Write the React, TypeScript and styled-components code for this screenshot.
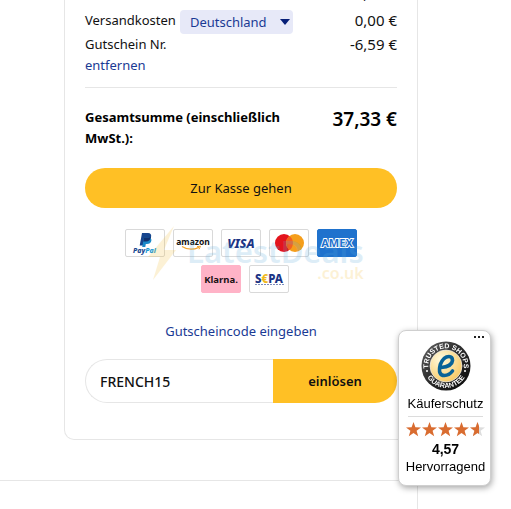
import React from "react";
import styled, { createGlobalStyle } from "styled-components";

const GlobalStyle = createGlobalStyle`
  *, *::before, *::after { box-sizing: border-box; }
  html { overflow: hidden; }
  body { margin: 0; background: #fff; color: #111; font: 13px/21px "Noto Sans", sans-serif; }
  button, input, select { font: inherit; color: inherit; margin: 0; }
`;

const Page = styled.div`
  min-height: 100vh;
  padding-right: 93px;
  display: grid;
  grid-template-columns: minmax(0, 1fr);
  grid-template-rows: auto 1fr;
`;

const Section = styled.section`
  padding: 0 0 40px 64px;
  border-bottom: 1px solid #e6e6e6;
`;

const Below = styled.div`
  min-height: 28px;
  border-right: 1px solid #e6e6e6;
`;

const Card = styled.main`
  position: relative;
  display: flow-root;
  padding: 0 20px 36px;
  border: 1px solid #e6e6e6;
  border-top: 0;
  border-radius: 0 0 10px 10px;
`;

const Totals = styled.dl`
  margin: 0;
  padding-bottom: 11px;
  border-bottom: 1px solid #e6e6e6;
`;

const Row = styled.div<{ $clipped?: boolean }>`
  display: flex;
  justify-content: space-between;
  align-items: flex-start;
  ${(p) => (p.$clipped ? "margin-top: -17px; margin-bottom: 6px;" : "")}
`;

const Term = styled.dt`
  display: flex;
  flex-wrap: wrap;
  column-gap: 4px;
`;

const Value = styled.dd`
  margin: 0;
  font-size: 15px;
  white-space: nowrap;
`;

const TextLink = styled.a`
  color: #1a3a94;
  text-decoration: none;
`;

const SelectWrap = styled.span`
  display: inline-grid;
  align-items: center;
  background: #e7e9f8;
  border-radius: 4px;
  color: #1a3a94;

  > * { grid-area: 1 / 1; }
  svg { justify-self: end; margin-right: 3px; pointer-events: none; }
`;

const CountrySelect = styled.select`
  appearance: none;
  height: 24px;
  padding: 0 26px 0 10px;
  border: 0;
  background: transparent;
`;

const GrandTotal = styled.div`
  display: flex;
  justify-content: space-between;
  padding: 19px 0;
  font-weight: 700;
  color: #000;
`;

const GrandLabel = styled.span`
  max-width: 220px;
`;

const GrandValue = styled.strong`
  font-size: 19px;
  font-weight: 600;
  line-height: 25px;
  white-space: nowrap;
`;

const Checkout = styled.button`
  width: 100%;
  height: 40px;
  border: 0;
  border-radius: 20px;
  background: #ffc025;
`;

const Payments = styled.ul`
  list-style: none;
  margin: 21px 0 28px;
  padding: 0 32px;
  display: flex;
  flex-wrap: wrap;
  justify-content: center;
  gap: 8px;
`;

const Payment = styled.li<{ $fill?: string }>`
  width: 40px;
  height: 28px;
  overflow: hidden;
  border: 1px solid ${(p) => p.$fill ?? "#d9d9d9"};
  border-radius: 2px;
  background: ${(p) => p.$fill ?? "#fff"};
  svg { display: block; width: 100%; height: 100%; }
  &:nth-child(6) { margin-left: 8px; }
`;

const Voucher = styled.form`
  display: grid;
  grid-template-columns: minmax(0, 1fr);
  gap: 17px;
  justify-items: center;
`;

const VoucherField = styled.div`
  display: flex;
  width: 100%;
  height: 44px;
`;

const VoucherInput = styled.input`
  flex: 1;
  min-width: 0;
  padding: 0 14px;
  border: 1px solid #e6e6e6;
  border-right: 0;
  border-radius: 22px 0 0 22px;
  background: #fff;
  font-size: 14px;
  font-weight: 500;
`;

const Redeem = styled.button`
  flex: 0 0 124px;
  border: 0;
  border-radius: 0 22px 22px 0;
  background: #ffc025;
  font-weight: 600;
`;

const Watermark = styled.div`
  position: absolute;
  top: 226px;
  left: 81px;
  display: flex;
  pointer-events: none;
  opacity: 0.2;
`;

const MarkText = styled.div`
  display: grid;
  justify-items: end;
  padding-top: 11px;
  font: 600 31px/28px "Noto Sans", sans-serif;
  color: #5aa9dc;
`;

const MarkSuffix = styled.span`
  font-size: 16px;
  line-height: 16px;
  color: #f5bd32;
`;

const Trust = styled.aside`
  position: fixed;
  right: 20px;
  bottom: 23px;
  width: 93px;
  padding: 10px 7px 9px 9px;
  border: 1px solid #cfcfcf;
  border-radius: 8px;
  background: #fff;
  box-shadow: 1px 2px 6px rgba(0, 0, 0, 0.35);
  display: grid;
  grid-template-columns: 100%;
  justify-items: center;
  color: #000;
  font: 13px/18px "Liberation Sans", sans-serif;
  > svg { display: block; }
`;

const MoreButton = styled.button`
  position: absolute;
  top: 5px;
  right: 6px;
  padding: 0;
  border: 0;
  background: none;
  display: flex;
`;

const TrustTitle = styled.div`
  width: 100%;
  padding: 4px 0 3px;
  border-bottom: 1px solid #dcdcdc;
  display: flex;
  justify-content: center;
`;

const Stars = styled.div`
  display: flex;
  gap: 1px;
  margin: 5px 0 3px;
`;

const Rating = styled.strong`
  font-size: 14px;
`;

const PayPal = () => (
  <svg viewBox="0 0 38 26" role="img" aria-label="PayPal">
    <path d="M16 3h6q4 0 3 4.500-1 4-5 4h-2l-.7 4h-3.600z" fill="#17468f" />
    <path d="M18 7.500h5q3 .5 2.300 3.500-.8 3-4.300 3h-1.200l-.5 3h-3.100z" fill="#1a8ac9" />
    <path d="M18 7.500h5q2 0 2-1-.8 5-5 5h-2.600z" fill="#12316e" />
    <text x="7" y="23" fontFamily="Noto Sans" fontSize="7" fontWeight="800" fontStyle="italic" fill="#17468f">Pay<tspan fill="#1a9ad4">Pal</tspan></text>
  </svg>
);

const Amazon = () => (
  <svg viewBox="0 0 38 26" role="img" aria-label="amazon">
    <text x="19" y="15" textAnchor="middle" fontFamily="Noto Sans" fontSize="8.500" fontWeight="700" fill="#111">amazon</text>
    <path d="M8 16.500q8 5 17 .8" fill="none" stroke="#f3a52d" strokeWidth="1.300" />
    <path d="m23 16.500 3.500-.2-1.500 3" fill="none" stroke="#f3a52d" />
  </svg>
);

const Visa = () => (
  <svg viewBox="0 0 38 26" role="img" aria-label="VISA">
    <text x="19" y="18" textAnchor="middle" fontFamily="Noto Sans" fontSize="12.500" fontWeight="800" fontStyle="italic" fill="#1b3485">VISA</text>
  </svg>
);

const Mastercard = () => (
  <svg viewBox="0 0 38 26" role="img" aria-label="Mastercard">
    <circle cx="14" cy="13" r="9" fill="#e3141d" />
    <circle cx="25" cy="13" r="9" fill="#f59e1b" />
    <path d="M19.500 5.900a9 9 0 0 1 0 14.200 9 9 0 0 1 0-14.200z" fill="#f26122" />
  </svg>
);

const Amex = () => (
  <svg viewBox="0 0 38 26" role="img" aria-label="AMEX">
    <text x="19" y="17" textAnchor="middle" fontFamily="Noto Sans" fontSize="11" fontWeight="700" fill="#1f72cd" stroke="#fff" strokeWidth="1.800" paintOrder="stroke">AMEX</text>
  </svg>
);

const Klarna = () => (
  <svg viewBox="0 0 38 26" role="img" aria-label="Klarna">
    <text x="19" y="17" textAnchor="middle" fontFamily="Noto Sans" fontSize="9.500" fontWeight="700" fill="#1a1114">Klarna.</text>
  </svg>
);

const Sepa = () => (
  <svg viewBox="0 0 38 26" role="img" aria-label="SEPA">
    <text x="19" y="17" textAnchor="middle" fontFamily="Noto Sans" fontSize="11.500" fontWeight="800" fill="#1b3485">S<tspan fill="#f0b91c">€</tspan>PA</text>
    <path d="M5 18.500h29" stroke="#7f8dbb" strokeWidth="1" strokeDasharray="2 1" />
  </svg>
);

const Seal = () => (
  <svg width="50" height="50" viewBox="0 0 50 50" role="img" aria-label="Trusted Shops Guarantee">
    <defs>
      <linearGradient id="sealRing" x1="0" y1="0" x2="1" y2="1">
        <stop offset="0" stopColor="#666" />
        <stop offset=".4" stopColor="#333" />
        <stop offset="1" stopColor="#050505" />
      </linearGradient>
      <radialGradient id="sealGold" cx=".35" cy=".3" r=".8">
        <stop offset="0" stopColor="#fffbe0" />
        <stop offset="1" stopColor="#f6c55b" />
      </radialGradient>
      <path id="arcTop" d="M8 30A17.700 17.700 0 1 1 42 30" />
      <path id="arcBottom" d="M3.300 28A21.900 21.900 0 0 0 46.700 28" />
    </defs>
    <circle cx="25" cy="25" r="24.500" fill="url(#sealRing)" />
    <circle cx="25" cy="25" r="16" fill="url(#sealGold)" stroke="#eee" strokeWidth=".7" />
    <g fill="#fff" fontFamily="Liberation Sans" fontWeight="700" textAnchor="middle">
      <text fontSize="7"><textPath href="#arcTop" startOffset="50%">TRUSTED SHOPS</textPath></text>
      <text fontSize="7"><textPath href="#arcBottom" startOffset="50%">GUARANTEE</textPath></text>
    </g>
    <circle cx="6" cy="30" r="1" fill="#fff" />
    <circle cx="44" cy="30" r="1" fill="#fff" />
    <path d="M20 26.500Q31 25.500 31.500 19.500 31.500 15.500 28 15.500 22.500 15.500 19.300 23.500 16.500 34.500 23.500 34.500 28 34.500 31.500 30" fill="none" stroke="#086398" strokeWidth="3.600" strokeLinecap="round" strokeLinejoin="round" />
  </svg>
);

const starPath = "M7.500 0l1.900 5.200 5.600.2-4.400 3.400 1.600 5.400-4.700-3.200-4.700 3.200 1.600-5.400L0 5.400l5.600-.2z";

const Star = ({ part }: { part?: boolean }) => (
  <svg width="15" height="15" viewBox="0 0 15 15" aria-hidden="true">
    {part && <path d={starPath} fill="#ddd" />}
    <path d={starPath} fill="#d96c30" clipPath={part ? "inset(0 6px 0 0)" : undefined} />
  </svg>
);

const methods = [
  { id: "paypal", Logo: PayPal },
  { id: "amazon", Logo: Amazon },
  { id: "visa", Logo: Visa },
  { id: "mastercard", Logo: Mastercard },
  { id: "amex", Logo: Amex, fill: "#1f72cd" },
  { id: "klarna", Logo: Klarna, fill: "#ffb3c7" },
  { id: "sepa", Logo: Sepa },
];

export default function App() {
  return (
    <>
      <GlobalStyle />
      <Page>
        <Section>
          <Card>
            <Totals>
              <Row $clipped>
                <Term>Zwischensumme (1 Artikel)</Term>
                <Value>43,92 €</Value>
              </Row>
              <Row>
                <Term>
                  <label htmlFor="country">Versandkosten</label>
                  <SelectWrap>
                    <CountrySelect id="country" defaultValue="de">
                      <option value="de">Deutschland</option>
                    </CountrySelect>
                    <svg width="10" height="6" viewBox="0 0 10 6" aria-hidden="true"><path d="M0 0h10L5 6z" fill="#071f78" /></svg>
                  </SelectWrap>
                </Term>
                <Value>0,00 €</Value>
              </Row>
              <Row>
                <Term>Gutschein Nr.</Term>
                <Value>-6,59 €</Value>
              </Row>
              <TextLink href="#entfernen">entfernen</TextLink>
            </Totals>
            <GrandTotal>
              <GrandLabel>Gesamtsumme (einschließlich MwSt.):</GrandLabel>
              <GrandValue>37,33 €</GrandValue>
            </GrandTotal>
            <Checkout type="button">Zur Kasse gehen</Checkout>
            <Payments>
              {methods.map(({ id, Logo, fill }) => (
                <Payment key={id} $fill={fill}><Logo /></Payment>
              ))}
            </Payments>
            <Voucher onSubmit={(e) => e.preventDefault()}>
              <TextLink href="#gutschein">Gutscheincode eingeben</TextLink>
              <VoucherField>
                <VoucherInput aria-label="Gutscheincode" defaultValue="FRENCH15" />
                <Redeem type="submit">einlösen</Redeem>
              </VoucherField>
            </Voucher>
            <Watermark aria-hidden="true">
              <svg width="41" height="54" viewBox="0 0 41 54"><path d="M28 0 2 31h12L7 54l23-30H18z" fill="#f5bd32" /></svg>
              <MarkText>LatestDeals<MarkSuffix>.co.uk</MarkSuffix></MarkText>
            </Watermark>
          </Card>
        </Section>
        <Below />
      </Page>
      <Trust>
        <MoreButton type="button" aria-label="Mehr">
          <svg width="10" height="3" viewBox="0 0 10 3"><path d="M0 0h2v2H0zM4 0h2v2H4zM8 0h2v2H8z" fill="#222" /></svg>
        </MoreButton>
        <Seal />
        <TrustTitle>Käuferschutz</TrustTitle>
        <Stars role="img" aria-label="4,57 von 5 Sternen">
          <Star /><Star /><Star /><Star /><Star part />
        </Stars>
        <Rating>4,57</Rating>
        <span>Hervorragend</span>
      </Trust>
    </>
  );
}
